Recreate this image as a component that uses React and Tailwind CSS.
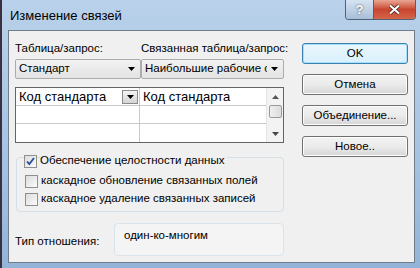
const FONT = { fontFamily: '"Liberation Sans", Arial, sans-serif' }

function Arrow({ className = '' }) {
  return (
    <svg width="7" height="4" viewBox="0 0 7 4" className={className}>
      <path d="M0 0h7L3.5 4z" fill="#000" />
    </svg>
  )
}

function Combo({ text, width }) {
  return (
    <div
      className={`h-[20px] ${width} flex items-center border border-[#acacac] rounded-[2px] bg-gradient-to-b from-[#f2f2f2] to-[#e3e3e3] pl-[3px] pr-[5px] overflow-hidden`}
    >
      <span className="flex-1 overflow-hidden text-[11.5px] text-black whitespace-nowrap mr-[4px]">{text}</span>
      <Arrow className="shrink-0" />
    </div>
  )
}

function Button({ label, focused }) {
  return (
    <div
      className={`h-[21px] w-[106px] flex items-center justify-center rounded-[3px] border text-[11.5px] text-black ${
        focused
          ? 'border-[#3c7fb1] bg-gradient-to-b from-[#eaf6fd] to-[#d9f0fc] shadow-[inset_0_0_0_1px_#a6e0fb]'
          : 'border-[#707070] bg-gradient-to-b from-[#f2f2f2] via-[#ebebeb] to-[#d6d6d6] shadow-[inset_0_0_0_1px_#fcfcfc]'
      }`}
    >
      {label}
    </div>
  )
}

function Check({ checked, label }) {
  return (
    <div className="flex items-center gap-[3px] h-[18px]">
      <div className="w-[13px] h-[13px] border border-[#8e8f8f] bg-gradient-to-br from-[#dcdcdc] to-[#fbfbfb] flex items-center justify-center">
        {checked && (
          <svg width="9" height="9" viewBox="0 0 9 9">
            <path d="M1 4.5l2.3 2.5L8 1" fill="none" stroke="#2a4c96" strokeWidth="1.8" />
          </svg>
        )}
      </div>
      <span className="text-[11.5px] text-black bg-[#f0f0f0] pr-[3px]">{label}</span>
    </div>
  )
}

export default function App() {
  return (
    <div
      className="w-[420px] h-[268px] overflow-hidden flex flex-col bg-gradient-to-b from-[#b9d1ea] via-[#a8c5e4] to-[#93b4d8] border-l-2 border-[#3b3040]"
      style={FONT}
    >
      {/* заголовок */}
      <div className="h-[30px] flex items-start shrink-0">
        <div className="pl-[8px] pt-[9px] text-[13px] text-black leading-none">Изменение связей</div>
        <div className="ml-auto mr-[4px] flex h-[20px] border border-[#4f6078] border-t-0 rounded-b-[4px] overflow-hidden">
          <div className="w-[28px] flex items-center justify-center bg-gradient-to-b from-[#d6e3f1] to-[#a8bfd8] border-r border-[#4f6078] text-white font-bold text-[13px] leading-none [text-shadow:0_0_2px_#333]">
            ?
          </div>
          <div className="w-[41px] flex items-center justify-center bg-gradient-to-b from-[#e8a593] via-[#c7452e] to-[#d4664a]">
            <svg width="13" height="11" viewBox="0 0 13 11">
              <path d="M2 1.5l9 8M11 1.5l-9 8" stroke="#3a1a14" strokeWidth="3.6" />
              <path d="M2 1.5l9 8M11 1.5l-9 8" stroke="#fff" strokeWidth="2.2" />
            </svg>
          </div>
        </div>
      </div>

      {/* клиентская область */}
      <div className="ml-[6px] mr-[5px] mb-[5px] flex-1 border border-[#6f7c8a] bg-[#f0f0f0] flex">
        <div className="pl-[6px] pt-[9px] w-[282px] flex flex-col">
          <div className="flex text-[11.5px] text-black h-[16px] leading-[16px]">
            <span className="w-[126px]">Таблица/запрос:</span>
            <span className="whitespace-nowrap">Связанная таблица/запрос:</span>
          </div>
          <div className="flex mt-[3px]">
            <Combo text="Стандарт" width="w-[126px]" />
            <Combo text="Наибольшие рабочие ог" width="w-[143px]" />
          </div>

          {/* таблица полей */}
          <div className="mt-[8px] w-[269px] h-[56px] border border-[#646464] bg-white flex">
            <div className="flex-1 flex flex-col">
              {[0, 1, 2].map((i) => (
                <div key={i} className={`flex h-[18px] ${i < 2 ? 'border-b border-[#c9c9c9]' : ''}`}>
                  <div className="w-[124px] border-r border-[#c9c9c9] flex items-center pl-[3px] pr-[1px]">
                    {i === 0 && (
                      <>
                        <span className="flex-1 text-[13px] leading-none text-black">Код стандарта</span>
                        <div className="w-[16px] h-[14px] border border-[#8a8a8a] bg-gradient-to-b from-[#f4f4f4] to-[#d4d4d4] flex items-center justify-center">
                          <Arrow />
                        </div>
                      </>
                    )}
                  </div>
                  <div className="flex-1 flex items-center pl-[3px]">
                    {i === 0 && <span className="text-[13px] leading-none text-black">Код стандарта</span>}
                  </div>
                </div>
              ))}
            </div>
            <div className="w-[17px] border-l border-[#e4e4e4] bg-[#f3f3f3] flex flex-col items-center">
              <div className="h-[17px] flex items-center justify-center">
                <svg width="7" height="4" viewBox="0 0 7 4">
                  <path d="M0 4h7L3.5 0z" fill="#555" />
                </svg>
              </div>
              <div className="w-[13px] h-[13px] border border-[#9a9a9a] rounded-[2px] bg-gradient-to-r from-[#f0f0f0] to-[#dcdcdc]" />
              <div className="mt-auto h-[17px] flex items-center justify-center">
                <Arrow className="opacity-70" />
              </div>
            </div>
          </div>

          {/* параметры */}
          <div className="mt-[14px] ml-[1px] w-[268px] h-[55px] border border-[#d5dfe5] rounded-[4px] relative">
            <div className="absolute left-[7px] top-[-6px]">
              <Check checked label="Обеспечение целостности данных" />
            </div>
            <div className="pl-[8px] pt-[14px] flex flex-col">
              <Check label="каскадное обновление связанных полей" />
              <Check label="каскадное удаление связанных записей" />
            </div>
          </div>

          <div className="mt-[11px] flex">
            <span className="w-[99px] pt-[10px] text-[11.5px] text-black">Тип отношения:</span>
            <div className="w-[170px] h-[33px] border border-[#dbe3ea] rounded-[4px] bg-[#f4f4f4] pl-[9px] pt-[3px] text-[11.5px] text-black">
              один-ко-многим
            </div>
          </div>
        </div>

        {/* кнопки */}
        <div className="ml-[11px] pt-[12px] flex flex-col gap-[10px]">
          <Button label="OK" focused />
          <Button label="Отмена" />
          <Button label="Объединение..." />
          <Button label="Новое.." />
        </div>
      </div>
    </div>
  )
}
